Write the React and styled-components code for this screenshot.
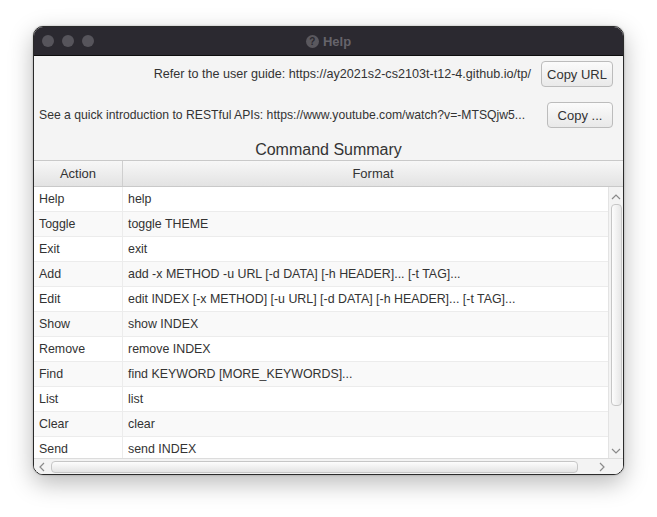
import React from 'react';
import styled, { createGlobalStyle } from 'styled-components';

const GlobalStyle = createGlobalStyle`
  body {
    margin: 0;
    background: #ffffff;
    font-family: "Liberation Sans", Arial, sans-serif;
  }
`;

const Page = styled.div`
  width: 657px;
  height: 517px;
  padding: 26px 0 0 33px;
  box-sizing: border-box;
`;

const Window = styled.div`
  width: 591px;
  height: 449px;
  border: 1px solid #2a2a2a;
  border-radius: 10px;
  overflow: hidden;
  box-sizing: border-box;
  display: flex;
  flex-direction: column;
  background: #f4f4f4;
  box-shadow: 0 8px 24px rgba(0, 0, 0, 0.28), 0 0 2px rgba(0, 0, 0, 0.3);
`;

const TitleBar = styled.div`
  height: 28px;
  flex: none;
  background: #2b2930;
  border-bottom: 1px solid #0d0d0d;
  display: flex;
  align-items: center;
  padding-left: 8px;
  position: relative;
`;

const Lights = styled.div`
  display: flex;
  gap: 8px;
`;

const Light = styled.span`
  width: 12px;
  height: 12px;
  border-radius: 50%;
  background: #56545b;
`;

const Title = styled.div`
  position: absolute;
  left: 0;
  right: 0;
  top: 0;
  bottom: 0;
  display: flex;
  align-items: center;
  justify-content: center;
  gap: 4px;
  color: #66646b;
  font-weight: bold;
  font-size: 13px;
`;

const QMark = styled.span`
  width: 13px;
  height: 13px;
  border-radius: 50%;
  background: #5a585e;
  color: #2b2930;
  font-size: 10px;
  font-weight: bold;
  display: flex;
  align-items: center;
  justify-content: center;
`;

const Content = styled.div`
  flex: 1;
  display: flex;
  flex-direction: column;
  padding-top: 5px;
  min-height: 0;
`;

const LinkRow = styled.div`
  display: flex;
  align-items: center;
  justify-content: ${({ $align }) => ($align === 'end' ? 'flex-end' : 'space-between')};
  gap: 10px;
  height: 26px;
  padding: 0 10px 0 5px;
  margin-bottom: 15px;
  color: #333333;
  white-space: nowrap;
`;

const LinkText = styled.span`
  font-size: ${({ $size }) => $size}px;
`;

const CopyButton = styled.button`
  height: 26px;
  width: ${({ $w }) => $w}px;
  flex: none;
  border: 1px solid #bcbcbc;
  border-radius: 4px;
  background: linear-gradient(#fbfbfb, #e9e9e9);
  font-family: inherit;
  font-size: 13px;
  color: #333333;
  padding: 0;
`;

const SectionTitle = styled.div`
  text-align: center;
  font-size: 16px;
  color: #333333;
  margin-top: -3px;
  height: 20px;
  line-height: 20px;
`;

const Table = styled.div`
  flex: 1;
  min-height: 0;
  display: grid;
  grid-template-columns: 1fr 15px;
  grid-template-rows: 26px minmax(0, 1fr) 16px;
  border-top: 1px solid #c9c9c9;
  background: #ffffff;
`;

const Header = styled.div`
  grid-column: 1 / 3;
  display: grid;
  grid-template-columns: 88px 1fr;
  background: linear-gradient(#f7f7f7, #e3e3e3);
  border-bottom: 1px solid #c9c9c9;
`;

const HeadCell = styled.div`
  display: flex;
  align-items: center;
  justify-content: center;
  font-size: 13px;
  color: #333333;
  & + & {
    border-left: 1px solid #cfcfcf;
  }
`;

const Body = styled.div`
  overflow: hidden;
  min-height: 0;
`;

const Row = styled.div`
  display: grid;
  grid-template-columns: 88px 1fr;
  height: 25px;
  background: ${({ $odd }) => ($odd ? '#f9f9f9' : '#ffffff')};
  border-bottom: 1px solid #ececec;
  box-sizing: border-box;
`;

const Cell = styled.div`
  display: flex;
  align-items: center;
  padding-left: 5px;
  font-size: 12.4px;
  color: #333333;
  white-space: nowrap;
  & + & {
    border-left: 1px solid #ececec;
  }
`;

const VScroll = styled.div`
  background: #f3f3f3;
  border-left: 1px solid #e3e3e3;
  display: flex;
  flex-direction: column;
  align-items: center;
  padding: 6px 0 3px;
`;

const HScroll = styled.div`
  grid-column: 1 / 3;
  background: #f3f3f3;
  border-top: 1px solid #dcdcdc;
  display: flex;
  align-items: center;
  padding: 0 17px 0 4px;
  gap: 5px;
`;

const VThumb = styled.div`
  width: 11px;
  height: 202px;
  margin-top: 3px;
  border: 1px solid #c6c6c6;
  border-radius: 4px;
  box-sizing: border-box;
  background: linear-gradient(90deg, #fdfdfd, #e6e6e6);
`;

const HThumb = styled.div`
  flex: 1;
  height: 12px;
  border: 1px solid #c6c6c6;
  border-radius: 4px;
  box-sizing: border-box;
  background: linear-gradient(#fdfdfd, #e4e4e4);
`;

const Spacer = styled.div`
  flex: ${({ $w }) => ($w ? `0 0 ${$w}px` : '1')};
`;

const Chevron = ({ dir }) => {
  const paths = {
    up: 'M1 6 L5 2 L9 6',
    down: 'M1 2 L5 6 L9 2',
    left: 'M6 1 L2 5 L6 9',
    right: 'M2 1 L6 5 L2 9',
  };
  const vertical = dir === 'up' || dir === 'down';
  return (
    <svg width={vertical ? 10 : 8} height={vertical ? 8 : 10} viewBox={vertical ? '0 0 10 8' : '0 0 8 10'}>
      <path d={paths[dir]} fill="none" stroke="#8a8a8a" strokeWidth="1.2" />
    </svg>
  );
};

const commands = [
  ['Help', 'help'],
  ['Toggle', 'toggle THEME'],
  ['Exit', 'exit'],
  ['Add', 'add -x METHOD -u URL [-d DATA] [-h HEADER]... [-t TAG]...'],
  ['Edit', 'edit INDEX [-x METHOD] [-u URL] [-d DATA] [-h HEADER]... [-t TAG]...'],
  ['Show', 'show INDEX'],
  ['Remove', 'remove INDEX'],
  ['Find', 'find KEYWORD [MORE_KEYWORDS]...'],
  ['List', 'list'],
  ['Clear', 'clear'],
  ['Send', 'send INDEX'],
];

export default function App() {
  return (
    <Page>
      <GlobalStyle />
      <Window>
        <TitleBar>
          <Lights>
            <Light />
            <Light />
            <Light />
          </Lights>
          <Title>
            <QMark>?</QMark>
            Help
          </Title>
        </TitleBar>
        <Content>
          <LinkRow $align="end">
            <LinkText $size={12.6}>Refer to the user guide: https://ay2021s2-cs2103t-t12-4.github.io/tp/</LinkText>
            <CopyButton $w={72}>Copy URL</CopyButton>
          </LinkRow>
          <LinkRow>
            <LinkText $size={12.2}>See a quick introduction to RESTful APIs: https://www.youtube.com/watch?v=-MTSQjw5...</LinkText>
            <CopyButton $w={66}>Copy ...</CopyButton>
          </LinkRow>
          <SectionTitle>Command Summary</SectionTitle>
          <Table>
            <Header>
              <HeadCell>Action</HeadCell>
              <HeadCell>Format</HeadCell>
            </Header>
            <Body>
              {commands.map(([action, format], i) => (
                <Row key={action} $odd={i % 2 === 1}>
                  <Cell>{action}</Cell>
                  <Cell>{format}</Cell>
                </Row>
              ))}
            </Body>
            <VScroll>
              <Chevron dir="up" />
              <VThumb />
              <Spacer />
              <Chevron dir="down" />
            </VScroll>
            <HScroll>
              <Chevron dir="left" />
              <HThumb />
              <Spacer $w={10} />
              <Chevron dir="right" />
            </HScroll>
          </Table>
        </Content>
      </Window>
    </Page>
  );
}
